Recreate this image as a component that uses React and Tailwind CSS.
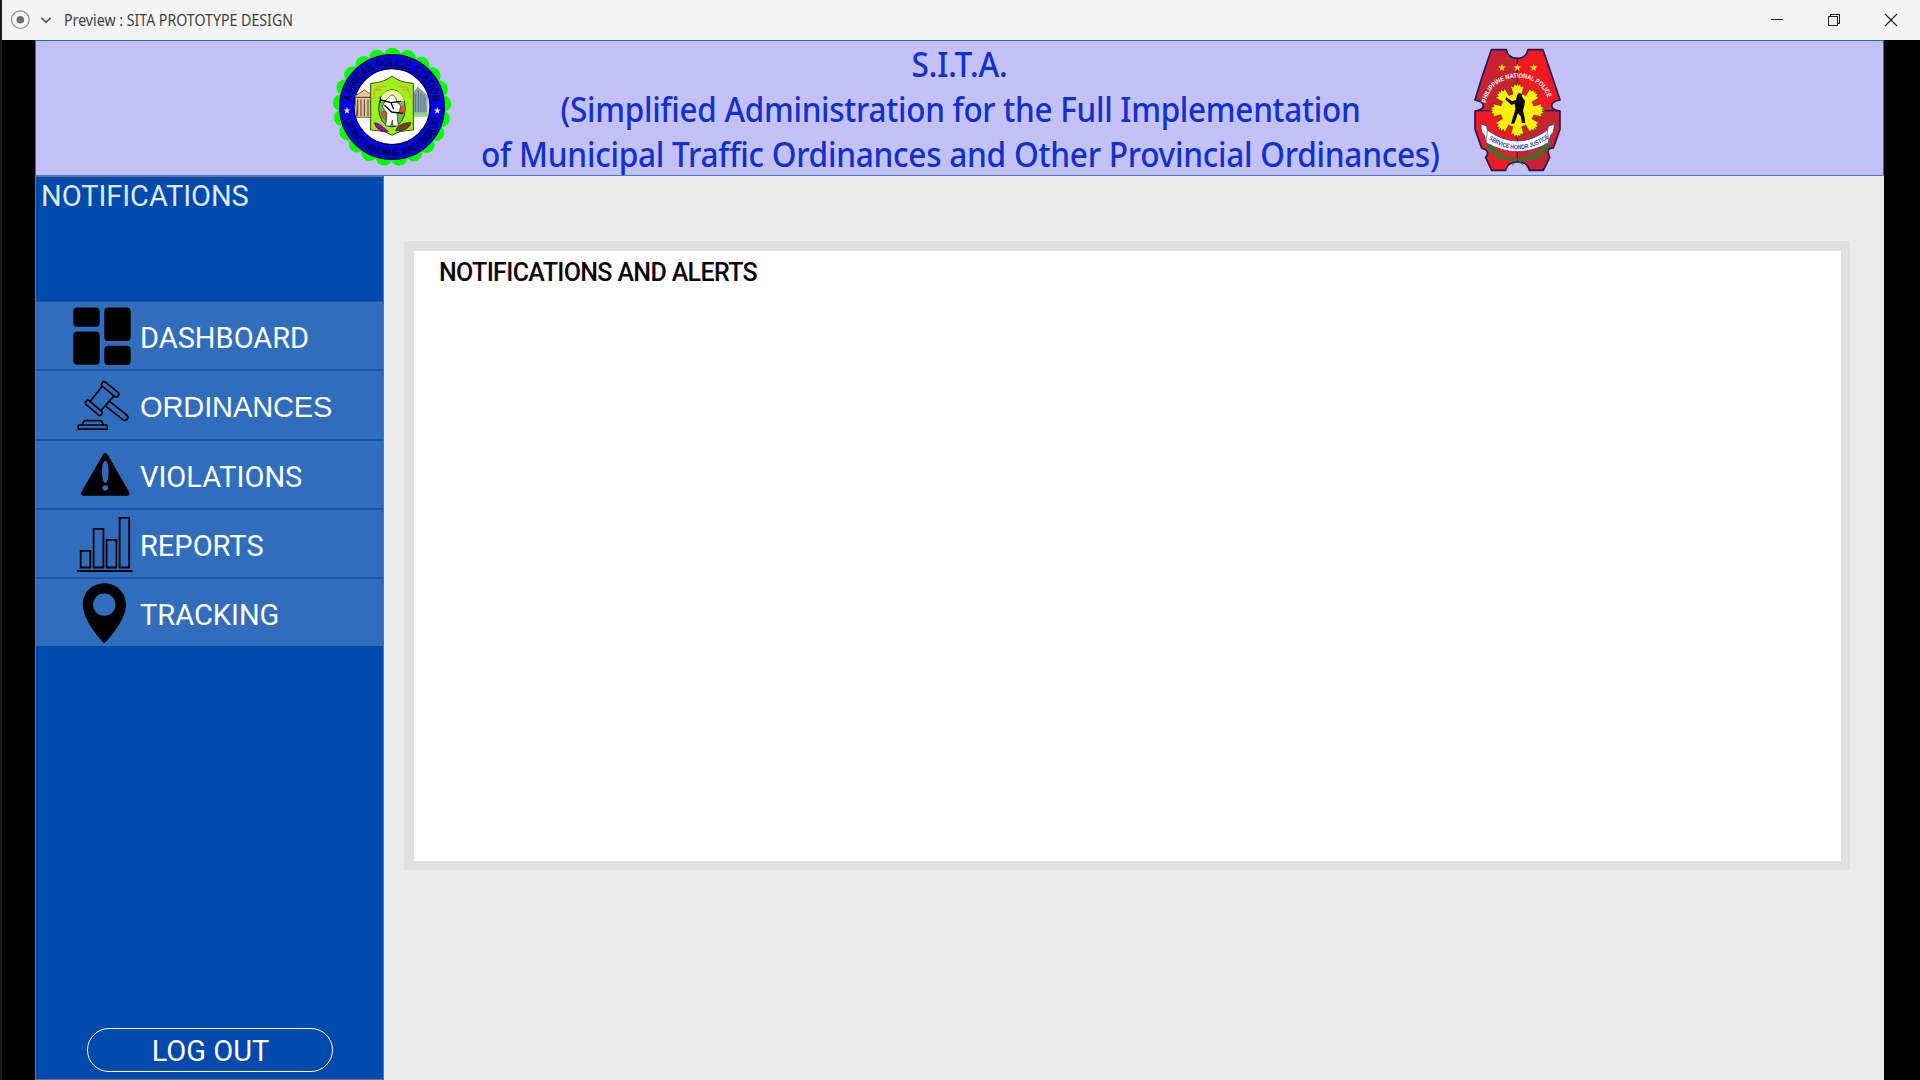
const SCALLOPS = Array.from({ length: 21 }, (_, i) => {
  const a = ((270.5 + (i * 360) / 21) * Math.PI) / 180;
  return [201 + 153 * Math.cos(a), 201 + 153 * Math.sin(a)];
});

function Star({ x, y, r, fill }) {
  const pts = Array.from({ length: 10 }, (_, i) => {
    const a = -Math.PI / 2 + (i * Math.PI) / 5;
    const q = i % 2 ? r * 0.4 : r;
    return `${x + q * Math.cos(a)},${y + q * Math.sin(a)}`;
  }).join(" ");
  return <polygon points={pts} fill={fill} />;
}

function StationSeal() {
  return (
    <svg className="h-[134px] w-[135px] shrink-0" viewBox="0 3 405 402">
      {SCALLOPS.map(([x, y]) => (
        <circle key={x} cx={x} cy={y} r="25" fill="#00ff00" />
      ))}
      <circle cx="201" cy="201" r="157" fill="#0000fb" stroke="#000030" strokeWidth="4" />
      <circle cx="201" cy="200" r="114" fill="#fff" stroke="#000030" strokeWidth="4" />
      <defs>
        <path id="sealTop" d="M79 201a122 122 0 0 1 244 0" />
        <path id="sealBottom" d="M54 201a147 147 0 0 0 294 0" />
      </defs>
      <text fontFamily="Liberation Sans Narrow, Liberation Sans" fontWeight="700" fontSize="37" fill="#000018">
        <textPath href="#sealTop" startOffset="16" textLength="352" lengthAdjust="spacingAndGlyphs">ASINGAN POLICE STATION</textPath>
      </text>
      <text fontFamily="Liberation Sans" fontSize="30" fill="#000018" stroke="#000018" strokeWidth="1">
        <textPath href="#sealBottom" startOffset="36" textLength="390" lengthAdjust="spacingAndGlyphs">LAGING HANDANG MAGLINGKOD</textPath>
      </text>
      <Star x={66} y={212} r={11} fill="#ffe95a" />
      <Star x={337} y={212} r={11} fill="#ffe95a" />
      <g>
        <path d="M90 168l28-18 22 14v68H95z" fill="#e9c79c" stroke="#33261a" strokeWidth="2" />
        <path d="M91 172h48M98 178v50M108 178v50M118 178v50M129 178v50" stroke="#4a3826" strokeWidth="3" />
        <path d="M264 158l14-18 30 26v52h-44z" fill="#8aa3af" />
        <path d="M272 160v58M280 152v66M288 160v58M297 166v52" stroke="#566f7c" strokeWidth="3" />
        <path d="M264 218h46l-4 12h-42z" fill="#8bd48a" />
      </g>
      <path d="M201 108c14 12 34 20 64 22v140c-26 2-46 4-64 16-18-12-38-14-64-16V130c30-2 50-10 64-22z" fill="#9bf516" stroke="#3a4410" strokeWidth="3" />
      <path d="M146 176c0-20 6-32 16-38m-8 6 30-6m-34 14 20-4M256 176c0-20-6-32-16-38m8 6-28-6m34 14-20-4" fill="none" stroke="#e2a63a" strokeWidth="5" />
      <ellipse cx="201" cy="205" rx="40" ry="56" fill="#69c045" stroke="#27400f" strokeWidth="3" />
      <path d="M164 184c6-22 20-34 37-34s31 12 37 34z" fill="#fff5a4" />
      <path d="M164 216l26-10v40c-14-6-22-14-26-30z" fill="#a86b2c" />
      <path d="M222 196l18 4-2 22-16-4z" fill="#e0502c" />
      <path d="M190 172q12-14 22 0l4 16 12 8-6 22-6 2 4 38h-16l-2-18-4 18h-16l4-38-14-20 8-16z" fill="#fff" stroke="#222" strokeWidth="2" />
      <path d="M168 180l30 8 30-4M178 196l22 20 34 4M198 188l8 20M166 170v18" fill="none" stroke="#050505" strokeWidth="4" />
      <path d="M148 248c14 0 28 14 42 26-20 2-38-6-42-26z" fill="#9c00b8" stroke="#4b115c" strokeWidth="2" />
      <path d="M212 272c4-14 24-26 46-24-2 16-26 28-46 24z" fill="#734121" stroke="#2d1708" strokeWidth="2" />
    </svg>
  );
}

const SHIELD =
  "M94 29H139C142 45 154 55 171 55S201 45 204 29H249L275 105L300 180C284 183 275 188 275 197S285 211 300 213V268L280 324C268 322 262 330 265 340L269 352L250 391H208C205 376 192 366 172 366S140 376 137 391H95L77 352C85 344 84 334 78 330L65 324L45 268V213C60 211 70 206 70 197S60 183 45 180L68 105Z";

function PoliceBadge() {
  return (
    <svg className="h-[134px] w-[115px] shrink-0" viewBox="0 3 345 402">
      <defs>
        <clipPath id="shieldClip"><path d={SHIELD} /></clipPath>
        <path id="badgeArc" d="M78 191C92 89 252 86 266 189" />
        <path id="ribbonArc" d="M80 289Q172 357 266 289" />
      </defs>
      <g clipPath="url(#shieldClip)">
        <path d="M0 0H172V405H0z" fill="#c8232f" />
        <path d="M172 0H345V205H172z" fill="#f01a22" />
        <path d="M0 205H172V405H0z" fill="#ee1c22" />
        <path d="M172 205H345V405H172z" fill="#c8232f" />
        <path d="M172 0V405M0 212H345" stroke="#23145c" strokeWidth="4" />
      </g>
      <path d={SHIELD} fill="none" stroke="#23145c" strokeWidth="5" strokeLinejoin="round" />
      <Star x={126} y={83} r={12} fill="#ffe100" />
      <Star x={172} y={83} r={12} fill="#ffe100" />
      <Star x={221} y={83} r={12} fill="#ffe100" />
      <text fontFamily="Liberation Sans" fontWeight="700" fontSize="20" fill="#fff">
        <textPath href="#badgeArc" startOffset="2" textLength="248" lengthAdjust="spacingAndGlyphs">PHILIPPINE NATIONAL POLICE</textPath>
      </text>
      {Array.from({ length: 8 }, (_, i) => (
        <path key={i} d="M163 176L152 137L161 141L163 131L169 137L172 126L175 137L181 131L183 141L192 137L182 176z" fill="#ffef00" stroke="#3c1c12" strokeWidth="1.5" transform={`rotate(${i * 45} 172 211)`} />
      ))}
      <circle cx="172" cy="211" r="50" fill="#fff100" />
      <path d="M171 166l6-8 8 4 2 10 8 10-2 16-4 14 4 16 3 21h-10l-4-20-8-10-4 12-7 20h-10l7-24 6-18-2-18-10 4-18-17 3-6 17 12 12-4z" fill="#050505" />
      <path d="M79 302q10 38 86 60m101-60q-10 38-86 60" fill="none" stroke="#12852d" strokeWidth="8" />
      <path d="M77 316l18 2m-12 12 20 0m-10 12 20-3m-6 14 20-8m-5 14 14-10M268 316l-18 2m12 12-20 0m10 12-20-3m6 14-20-8m5 14-14-10" stroke="#12852d" strokeWidth="6" />
      <path d="M158 346l32 30M188 346l-32 30" stroke="#12852d" strokeWidth="3" />
      <path d="M62 252L80 258 82 270Q172 336 262 270L266 258 284 252 280 276 272 286 266 308Q172 362 78 308L73 286 65 276z" fill="#fff" stroke="#2d3f94" strokeWidth="2.5" />
      <path d="M82 270l-4 38M262 270l4 38" stroke="#2d3f94" strokeWidth="2" />
      <text fontFamily="Liberation Sans" fontWeight="700" fontSize="19" fill="#2446a5" transform="translate(0 5)">
        <textPath href="#ribbonArc" startOffset="7" textLength="196" lengthAdjust="spacingAndGlyphs">SERVICE HONOR JUSTICE</textPath>
      </text>
    </svg>
  );
}

/* Menu icons share a 64x68 box whose left edge lies 36px inside the sidebar. */
function MenuIcon({ children }) {
  return (
    <svg className="mb-px h-[68px] w-[64px] shrink-0" viewBox="0 0 64 68" fill="none" stroke="#000" strokeLinejoin="round">
      {children}
    </svg>
  );
}

const MENU = [
  {
    label: "DASHBOARD",
    font: "font-[Roboto]",
    icon: (
      <MenuIcon>
        <g fill="#000" stroke="none" transform="translate(0 1)">
          <rect x="1.3" y="5.5" width="26.4" height="19.2" rx="4" />
          <rect x="32.3" y="5.5" width="26.4" height="33.4" rx="4" />
          <rect x="1.3" y="29.4" width="26.4" height="33.4" rx="4" />
          <rect x="32.3" y="43.7" width="26.4" height="19.2" rx="4" />
        </g>
      </MenuIcon>
    ),
  },
  {
    label: "ORDINANCES",
    font: "font-['Liberation_Sans'] tracking-[-0.1px]",
    icon: (
      <MenuIcon>
        <g strokeWidth="1.7" transform="translate(0.5 1.5)">
          <path d="M32.2 10.2L45.8 21.2Q47.2 22.4 46.2 23.6L44.9 25.1Q43.8 26.3 42.5 25.2L29.5 14.3Q28.2 13.2 29.2 12L30.4 10.6Q31.2 9.5 32.2 10.2z" />
          <path d="M16.4 29L29.2 40Q30.5 41.1 29.5 42.3L28.5 43.5Q27.4 44.6 26.2 43.6L13.4 32.8Q12.2 31.6 13.2 30.4L14.2 29.2Q15.2 28 16.4 29z" />
          <path d="M29.7 14.7L17.8 29.8M41.5 24.4L28.3 39.4M36.8 29.6L54.3 43.6Q56.3 45.6 54.8 47.7Q52.8 49.7 50.3 48.2L33 34.3" />
          <path d="M6.5 53.5H33.5Q34.7 53.5 34.7 55V57.7H5.7V55Q5.7 53.5 6.5 53.5zM10 53.2Q10.5 49.2 13 49.2H27Q30 49.2 30.5 53.2" />
        </g>
      </MenuIcon>
    ),
  },
  {
    label: "VIOLATIONS",
    font: "font-[Roboto] relative top-px",
    icon: (
      <MenuIcon>
        <path d="M33.3 15.5L55 53.3H11.6z" fill="#000" strokeWidth="5" />
        <ellipse cx="33.3" cy="32" rx="3.3" ry="11.3" fill="#316dbd" stroke="none" />
        <circle cx="33.3" cy="48" r="2.8" fill="#316dbd" stroke="none" />
      </MenuIcon>
    ),
  },
  {
    label: "REPORTS",
    font: "font-[Roboto]",
    icon: (
      <MenuIcon>
        <g strokeWidth="1.8" strokeLinejoin="miter" transform="translate(0 0.7)">
          <path d="M8.7 41.2h9.6v16.6H8.7zM21.6 19.2h9.8v38.6h-9.8zM34.6 30.2h9.8v27.6h-9.8zM47.6 8.2h9.6v49.6h-9.6zM5 61.3h55.5" />
        </g>
      </MenuIcon>
    ),
  },
  {
    label: "TRACKING",
    font: "font-[Roboto]",
    icon: (
      <MenuIcon>
        <path fillRule="evenodd" fill="#000" stroke="none" d="M32.3 5.2C44.5 5.2 54 14.5 54 26.5C54 42 36.5 61 33.5 64.3Q32.3 65.6 31.1 64.3C28 61 10.8 42 10.8 26.5C10.8 14.5 20.2 5.2 32.3 5.2zM32.3 15.5a11.2 11.2 0 1 0 0 22.4a11.2 11.2 0 1 0 0-22.4z" />
      </MenuIcon>
    ),
  },
];

function TitleBar() {
  return (
    <div className="ml-[2px] flex h-10 items-center bg-[#f4f4f4] font-['Noto_Sans']">
      <svg className="ml-[8px] h-5 w-5" viewBox="0 0 20 20" fill="none">
        <circle cx="10.3" cy="9.7" r="8.8" stroke="#8a8a8a" strokeWidth="1.2" />
        <circle cx="10.3" cy="9.7" r="3.8" fill="#707070" />
      </svg>
      <svg className="ml-[10px] h-3 w-3" viewBox="0 0 12 12" fill="none">
        <path d="M1.3 3.8L6 8.4L10.7 3.8" stroke="#505050" strokeWidth="1.6" />
      </svg>
      <span className="ml-[11.5px] origin-left scale-x-[0.885] text-[16px] whitespace-nowrap text-[#404040]">Preview : SITA PROTOTYPE DESIGN</span>
      <svg className="mr-[20px] ml-auto h-5 w-[132px]" viewBox="0 0 132 20" fill="none" stroke="#222" shapeRendering="crispEdges">
        <path d="M3 9.5h12" />
        <path d="M60.5 6.5h9v9h-9zM62.5 6.5v-2h9v9h-2" />
        <path d="M117 4l12 12M129 4l-12 12" shapeRendering="auto" strokeWidth="1.1" />
      </svg>
    </div>
  );
}

export default function App() {
  return (
    <div className="flex h-[1080px] w-[1920px] flex-col overflow-hidden bg-black font-[Roboto]">
      <div className="bg-[#1c1c1c]"><TitleBar /></div>
      <div className="flex min-h-0 grow">
        <div className="w-[2px] bg-[#1c1c1c]" />
        <div className="ml-[33px] flex w-[1849px] flex-col bg-[#ebebeb]">
          <header className="flex h-[136px] shrink-0 border border-[#0f6cf5] border-b-[#3a7ff0] bg-[#c4c1f8] pl-[289px]">
            <StationSeal />
            <h1 className="flex w-[1000px] flex-col items-center pt-px font-['Noto_Sans'] text-[34px] leading-[45px] font-medium whitespace-nowrap text-[#1230d0]">
              <span className="scale-x-[0.93] tracking-[-0.2px]">S.I.T.A.</span>
              <span className="scale-x-[0.925] tracking-[-0.3px]">(Simplified Administration for the Full Implementation</span>
              <span className="scale-x-[0.93] tracking-[-0.3px]">of Municipal Traffic Ordinances and Other Provincial Ordinances)</span>
            </h1>
            <PoliceBadge />
          </header>
          <div className="flex min-h-0 grow">
            <aside className="flex w-[349px] shrink-0 flex-col border border-[#6c7380] bg-[#004aad] text-[29px]">
              <h2 className="h-[124px] pt-[2px] pl-[5px] leading-[34px] tracking-[-0.05px] text-[#dfe8ff]">NOTIFICATIONS</h2>
              <nav className="flex flex-col">
                {MENU.map((item) => (
                  <a key={item.label} className="flex h-[69.25px] items-center border-t-2 border-[#1d56a8] bg-[#316dbd] pl-[36px] text-white first:h-[68.25px] first:border-t">
                    {item.icon}
                    <span className={`ml-[4px] pt-[6px] ${item.font}`}>{item.label}</span>
                  </a>
                ))}
              </nav>
              <button className="mx-auto mt-auto mb-[7px] flex h-[44px] w-[246px] items-center justify-center rounded-full border border-white pt-[4px] pl-[2px] text-white">LOG OUT</button>
            </aside>
            <main className="grow pt-[65px] pl-[20px]">
              <section className="h-[629px] w-[1446px] border-t-10 border-r-9 border-b-9 border-l-10 border-[#e0e0e0] bg-white pt-[7px] pl-[25px]">
                <h3 className="text-[25px] leading-[30px] font-medium tracking-[-0.65px] text-[#0c0606]">NOTIFICATIONS AND ALERTS</h3>
              </section>
            </main>
          </div>
        </div>
      </div>
    </div>
  );
}
